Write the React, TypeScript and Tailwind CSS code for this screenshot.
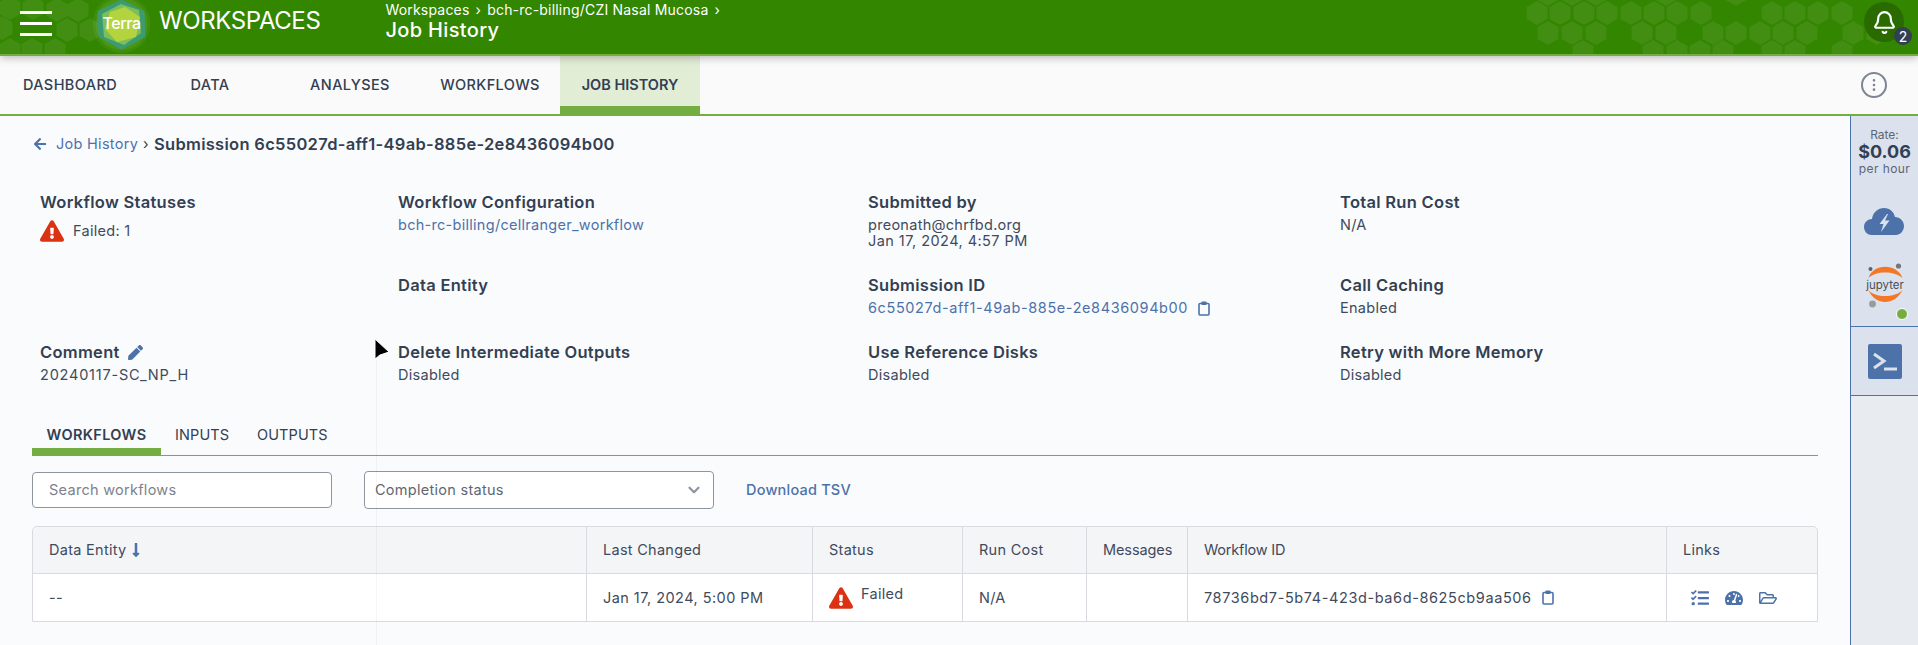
import React from 'react';
import { FaArrowLeft, FaExclamationTriangle, FaLongArrowAltDown, FaPen, FaRegFolderOpen, FaTachometerAlt, FaTasks } from 'react-icons/fa';
import { Bell, ChevronDown, EllipsisVertical } from 'lucide-react';

const hexes = [
  [10, 8], [33, 8], [57, 10], [78, 10], [2, 28], [67, 30], [90, 30], [10, 50], [32, 50], [55, 50],
  [1537, 13], [1560, 13], [1584, 13], [1607, 13], [1631, 13], [1654, 13], [1677, 13], [1701, 13],
  [1772, 13], [1795, 13], [1818, 13], [1842, 13],
  [1548, 33], [1572, 33], [1596, 33], [1642, 33], [1666, 33], [1713, 33], [1736, 33], [1760, 33], [1783, 33], [1807, 33], [1853, 33], [1877, 33],
  [1583, 52], [1653, 52], [1677, 52], [1700, 52], [1723, 52], [1772, 52], [1795, 52], [1842, 52],
  [1548, -6], [1572, -6], [1596, -6], [1666, -6], [1736, -6],
];

const HexPattern = () => (
  <svg className="absolute inset-0" width="1918" height="54" viewBox="0 0 1918 54">
    {hexes.map(([x, y]) => (
      <polygon
        key={`${x}-${y}`}
        points={`${x},${y - 12} ${x + 10.5},${y - 6} ${x + 10.5},${y + 6} ${x},${y + 12} ${x - 10.5},${y + 6} ${x - 10.5},${y - 6}`}
        fill="#ffffff"
        fillOpacity="0.07"
      />
    ))}
  </svg>
);

const TerraLogo = () => (
  <div className="relative w-[49px] h-[54px] shrink-0 flex items-center justify-center">
    <svg className="absolute -left-[12px] -top-[4px] overflow-visible" width="73" height="58" viewBox="-12 -4 73 58">
      <circle cx="24.5" cy="24" r="29" fill="#a9d46a" fillOpacity="0.1" />
      <circle cx="24.5" cy="24" r="26" fill="#a9d46a" fillOpacity="0.12" />
      <polygon points="24.5,1 46,12 47,36 24.5,48 3,36 2,12" fill="#3b9b73" stroke="#3b9b73" strokeWidth="3" strokeLinejoin="round" />
      <polygon points="24,4 42,10 44,33 27,45 7,37 5,14" fill="#7cbf5a" />
      <polygon points="28,7 43,17 39,37 20,42 8,29 13,12" fill="#b4d43f" />
    </svg>
    <span className="relative -mt-[8px] text-[16px] font-medium text-white tracking-[-0.4px]">Terra</span>
  </div>
);

const Header = () => (
  <header className="relative h-[56px] shrink-0 bg-[#338600] border-b-2 border-[#74ae43] shadow-[0_2px_8px_rgba(0,0,0,0.25)] z-10 flex items-start text-white">
    <HexPattern />
    <div className="relative flex flex-col gap-[8px] w-[32px] ml-5 mt-[11px]">
      <div className="h-[3px] bg-white" />
      <div className="h-[3px] bg-white" />
      <div className="h-[3px] bg-white" />
    </div>
    <div className="relative ml-[45px]">
      <TerraLogo />
    </div>
    <div className="relative ml-[13px] mt-[7px] text-[24px] leading-[28px] tracking-[-0.4px]">WORKSPACES</div>
    <div className="relative ml-[65px] flex flex-col">
      <div className="text-[14px] leading-[20px] tracking-[0.2px] flex items-center">
        <span>Workspaces</span>
        <span className="mx-[6px]">›</span>
        <span>bch-rc-billing/CZI Nasal Mucosa</span>
        <span className="mx-[6px]">›</span>
      </div>
      <div className="text-[20px] leading-[20px] font-medium tracking-[0.35px]">Job History</div>
    </div>
    <div className="absolute left-[1864px] top-[2px] w-[40px] h-[40px] rounded-full bg-[#2a6b00] flex items-center justify-center">
      <Bell size={25} strokeWidth={2} />
    </div>
    <div className="absolute left-[1894px] top-[27px] w-[18px] h-[18px] rounded-full bg-[#333f52] flex items-center justify-center text-[14px] tracking-normal">2</div>
  </header>
);

const navTabs = ['DASHBOARD', 'DATA', 'ANALYSES', 'WORKFLOWS', 'JOB HISTORY'];

const NavBar = () => (
  <nav className="h-[60px] shrink-0 bg-[#fafafa] border-b-2 border-[#74ae43] flex items-stretch text-[#333f52]">
    {navTabs.map((t) =>
      t === 'JOB HISTORY' ? (
        <div key={t} className="w-[140px] bg-[#e2edd6] border-b-[8px] border-[#74ae43] pt-[21px] text-center text-[14.5px] leading-[16px] font-semibold tracking-[0px]">
          {t}
        </div>
      ) : (
        <div key={t} className="w-[140px] pt-[21px] text-center text-[14.5px] leading-[16px] font-medium tracking-[0.4px]">
          {t}
        </div>
      )
    )}
    <div className="ml-auto mr-[31px] self-center w-[26px] h-[26px] rounded-full border-2 border-[#7d8594] flex items-center justify-center text-[#7d8594]">
      <EllipsisVertical size={16} />
    </div>
  </nav>
);

const ClipIcon = ({ className }: { className?: string }) => (
  <svg className={className} width="12" height="15" viewBox="0 0 12 15">
    <rect x="1" y="2.5" width="10" height="11.5" rx="1" fill="none" stroke="currentColor" strokeWidth="1.6" />
    <rect x="3.5" y="0.5" width="5" height="3.5" rx="0.8" fill="currentColor" />
  </svg>
);

const Field = ({ title, children }: { title: React.ReactNode; children?: React.ReactNode }) => (
  <div>
    <div className="text-[16.5px] leading-[24px] font-semibold text-[#333f52] tracking-[0.3px] flex items-center gap-[8px]">{title}</div>
    <div className="mt-[3px] text-[14.5px] leading-[16px] text-[#3f4a5c]">{children}</div>
  </div>
);

const Summary = () => (
  <div className="grid grid-cols-[358px_470px_472px_1fr] grid-rows-[83px_67px_auto] mt-[36px] ml-[40px]">
    <div>
      <div className="text-[16.5px] leading-[24px] font-semibold text-[#333f52] tracking-[0.3px]">Workflow Statuses</div>
      <div className="flex items-center gap-[9px] mt-[5px] text-[14.5px] text-[#3f4a5c]">
        <FaExclamationTriangle size={24} className="text-[#db3214]" />
        <span>Failed: 1</span>
      </div>
    </div>
    <Field title="Workflow Configuration">
      <span className="text-[#4d72aa]">bch-rc-billing/cellranger_workflow</span>
    </Field>
    <Field title="Submitted by">
      <div>preonath@chrfbd.org</div>
      <div className="tracking-[0.45px]">Jan 17, 2024, 4:57 PM</div>
    </Field>
    <Field title="Total Run Cost">N/A</Field>

    <div />
    <Field title="Data Entity" />
    <Field title="Submission ID">
      <div className="flex items-center gap-[10px] text-[#4d72aa] tracking-[0.6px]">
        <span>6c55027d-aff1-49ab-885e-2e8436094b00</span>
        <ClipIcon />
      </div>
    </Field>
    <Field title="Call Caching">Enabled</Field>

    <Field
      title={
        <>
          Comment
          <FaPen size={15} className="text-[#4d72aa]" />
        </>
      }
    >
      <span className="tracking-[0.8px]">20240117-SC_NP_H</span>
    </Field>
    <Field title="Delete Intermediate Outputs">Disabled</Field>
    <Field title="Use Reference Disks">Disabled</Field>
    <Field title="Retry with More Memory">Disabled</Field>
  </div>
);

const SubTabs = () => (
  <div className="flex mt-[33px] mx-[32px] border-b border-[#74ae43] h-[40px] text-[14.5px] text-[#333f52]">
    <div className="w-[129px] border-b-[8px] border-[#74ae43] -mb-px pt-[11px] text-center leading-[16px] font-semibold tracking-[0.35px]">WORKFLOWS</div>
    <div className="w-[52px] ml-[14px] pt-[11px] text-center leading-[16px] tracking-[0.1px]">INPUTS</div>
    <div className="w-[67px] ml-[30px] pt-[11px] text-center leading-[16px] tracking-[0.1px]">OUTPUTS</div>
  </div>
);

const Filters = () => (
  <div className="flex items-center mt-[15px] mx-[32px] text-[14.5px]">
    <div className="w-[300px] h-[36px] bg-white border border-[#8f95a0] rounded-[4px] pl-[16px] flex items-center text-[#7c828d]">Search workflows</div>
    <div className="ml-[32px] w-[350px] h-[38px] bg-white border border-[#8f95a0] rounded-[4px] pl-[10px] pr-[10px] flex items-center justify-between text-[#5f6773]">
      <span>Completion status</span>
      <ChevronDown size={18} strokeWidth={3} className="text-[#8f95a0]" />
    </div>
    <div className="ml-[32px] text-[#4d72aa] font-medium tracking-[0.2px]">Download TSV</div>
  </div>
);

const headCell = 'h-[46px] px-[16px] flex items-center border-r border-[#d8dadf] last:border-r-0';
const bodyCell = 'h-[47px] px-[16px] flex items-center border-r border-[#d8dadf] last:border-r-0';

const WorkflowTable = () => (
  <div className="mt-[17px] mx-[32px] border border-[#d8dadf] rounded-t-[5px] text-[14.5px] text-[#3f4a5c]">
    <div className="grid grid-cols-[554px_226px_150px_124px_101px_479px_1fr] bg-[#f4f5f7] border-b border-[#d8dadf] rounded-t-[5px]">
      <div className={headCell}>
        Data Entity
        <FaLongArrowAltDown size={16} className="ml-[2px] text-[#4d72aa]" />
      </div>
      <div className={headCell}>Last Changed</div>
      <div className={headCell}>Status</div>
      <div className={headCell}>Run Cost</div>
      <div className={`${headCell} tracking-[-0.1px]`}>Messages</div>
      <div className={`${headCell} tracking-[-0.2px]`}>Workflow ID</div>
      <div className={headCell}>Links</div>
    </div>
    <div className="grid grid-cols-[554px_226px_150px_124px_101px_479px_1fr] bg-white">
      <div className={bodyCell}>--</div>
      <div className={`${bodyCell} tracking-[0.45px]`}>Jan 17, 2024, 5:00 PM</div>
      <div className={bodyCell}>
        <FaExclamationTriangle size={24} className="text-[#db3214] mr-[8px]" />
        <span className="-mt-[8px]">Failed</span>
      </div>
      <div className={bodyCell}>N/A</div>
      <div className={bodyCell} />
      <div className={`${bodyCell} tracking-[0.6px]`}>
        78736bd7-5b74-423d-ba6d-8625cb9aa506
        <ClipIcon className="ml-[10px] text-[#4d72aa]" />
      </div>
      <div className={`${bodyCell} gap-[16px] text-[#4d72aa]`}>
        <FaTasks size={18} className="ml-[8px]" />
        <FaTachometerAlt size={18} />
        <FaRegFolderOpen size={18} />
      </div>
    </div>
  </div>
);

const Sidebar = () => (
  <aside className="w-[68px] shrink-0 border-l border-[#4d72aa] bg-[#e8ecf0] flex flex-col text-[#333f52] tracking-normal">
    <div className="h-[211px] bg-[#dbe2ee] border-b border-[#4d72aa] flex flex-col items-center">
      <div className="mt-[12px] text-[12px] leading-[14px] text-[#5b6578]">Rate:</div>
      <div className="text-[18px] leading-[20px] font-bold">$0.06</div>
      <div className="text-[12px] leading-[14px] text-[#5b6578] tracking-[0.4px]">per hour</div>
      <svg className="mt-[30px] -ml-[2px]" width="42" height="30" viewBox="0 0 42 30">
        <path d="M9 29 C3 29 1 24 1 21 C1 16 5 13 9 13 C10 6 15 2 21 2 C27 2 31 6 32 11 C37 11 41 15 41 20 C41 25 37 29 33 29 Z" fill="#4d72aa" />
        <path d="M24 8 L16.5 18 H20.5 L18 26 L26.5 14.5 H22 L25 8 Z" fill="#dbe2ee" />
      </svg>
      <svg className="mt-[24px]" width="44" height="56" viewBox="0 0 44 56">
        <circle cx="7.5" cy="9" r="2" fill="#616262" />
        <circle cx="35.5" cy="6" r="2.6" fill="#767677" />
        <circle cx="9.5" cy="44" r="3.4" fill="#9a9a9a" />
        <path d="M5.5 18 C10 3 34 3 39.5 18 C32 10.5 12 10.5 5.5 18 Z" fill="#f37726" />
        <path d="M5.5 30 C12 46 32 46 39.5 30 C32 38 12 38 5.5 30 Z" fill="#f37726" />
        <text x="22" y="28.5" textAnchor="middle" fontSize="11.5" fill="#4e4e4e" fontFamily="Inter, sans-serif">jupyter</text>
      </svg>
    </div>
    <div className="h-[69px] bg-[#dbe2ee] border-b border-[#4d72aa] flex items-center justify-center">
      <svg width="34" height="35" viewBox="0 0 34 35">
        <rect width="34" height="35" rx="2" fill="#4d72aa" />
        <path d="M6 10 L16 17 L6 24" fill="none" stroke="#dbe2ee" strokeWidth="3" />
        <path d="M16 25 H29" stroke="#dbe2ee" strokeWidth="3" />
      </svg>
    </div>
  </aside>
);

const App = () => (
  <div className="relative w-[1918px] h-[645px] overflow-hidden flex flex-col bg-[#fafbfd] font-['Inter',sans-serif] tracking-[0.28px]">
    <Header />
    <NavBar />
    <div className="flex flex-1 min-h-0">
      <main className="flex-1 min-w-0">
        <div className="flex items-center mt-[18px] ml-[33px] h-[20px] text-[14.5px] text-[#4d72aa]">
          <FaArrowLeft size={14} />
          <span className="ml-[9px]">Job History</span>
          <span className="mx-[5px] text-[#333f52]">›</span>
          <span className="text-[16.5px] font-semibold text-[#333f52] tracking-[0.3px]">Submission 6c55027d-aff1-49ab-885e-2e8436094b00</span>
        </div>
        <Summary />
        <SubTabs />
        <Filters />
        <WorkflowTable />
      </main>
      <Sidebar />
    </div>
    {/* mouse cursor and the faint drag line caught in the capture */}
    <div className="absolute left-[376px] top-[360px] bottom-0 w-px bg-[#000000]/[0.04]" />
    <svg className="absolute left-[374px] top-[338px]" width="18" height="24" viewBox="0 0 18 24">
      <path d="M1 1 V21 L6 17 L15 14 Z" fill="#000" stroke="#fff" strokeWidth="1" />
    </svg>
    <div className="absolute left-[1896px] top-[308px] w-[12px] h-[12px] rounded-full bg-[#74ae43] border border-white" />
  </div>
);

export default App;
